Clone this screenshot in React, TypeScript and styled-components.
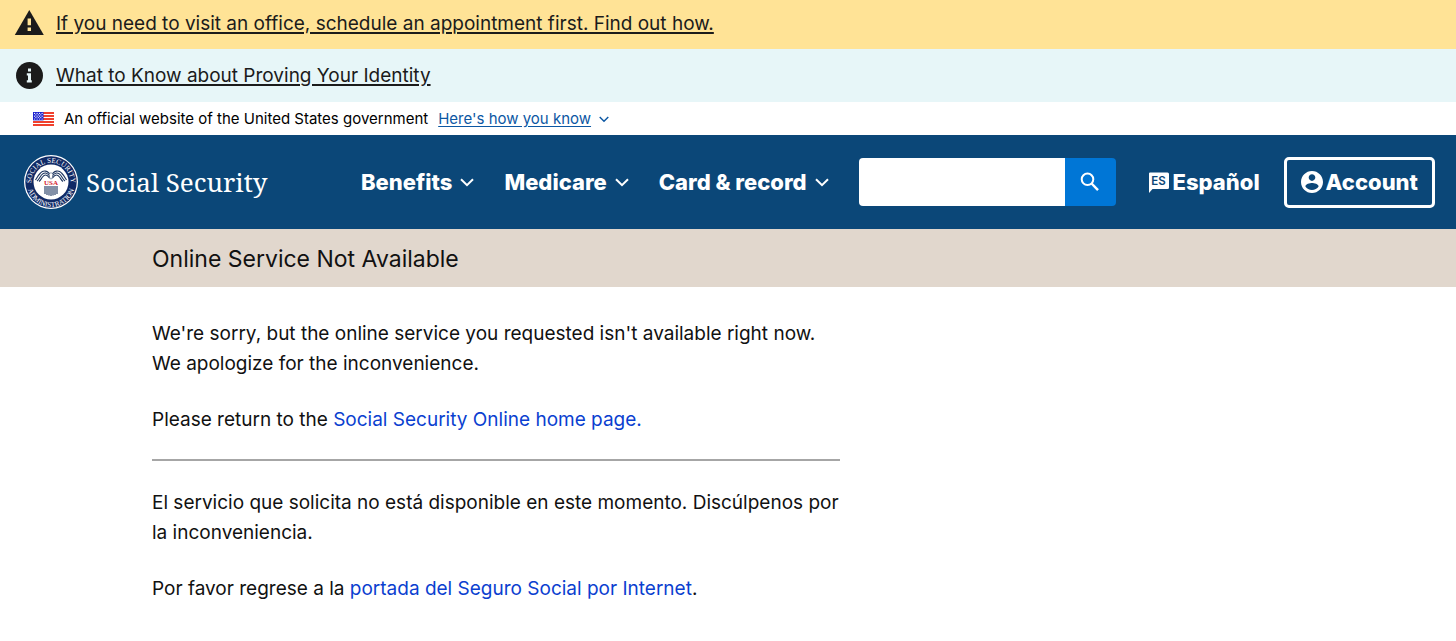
import React from "react";
import styled, { createGlobalStyle } from "styled-components";

const sans = `Inter, "Liberation Sans", sans-serif`;
const serif = `"Noto Serif", "Liberation Serif", serif`;

const GlobalStyle = createGlobalStyle`
  *, *::before, *::after { box-sizing: border-box; }
  body { margin: 0; background: #fff; color: #111; font-family: ${sans}; }
`;

const Alert = styled.section<{ $tone: "warning" | "info" }>`
  display: flex;
  align-items: center;
  gap: 10px;
  padding: ${(p) => (p.$tone === "warning" ? "9px 14px 10px" : "12px 14px 11px")};
  background: ${(p) => (p.$tone === "warning" ? "#ffe396" : "#e7f6f8")};
`;

const AlertIcon = styled.svg`
  flex: none;
  width: 32px;
  height: 30px;
`;

const AlertLink = styled.a`
  color: #1b1b1b;
  font-size: 19px;
  line-height: 30px;
  text-underline-offset: 2px;
  text-decoration-thickness: 2px;
`;

const GovBanner = styled.section`
  display: flex;
  align-items: center;
  gap: 10px;
  min-height: 33px;
  padding: 0 33px;
  color: #000;
  font-size: 15px;
  line-height: 20px;
`;

const Flag = styled.svg`
  flex: none;
  width: 21px;
  height: 14px;
`;

const BannerButton = styled.button`
  display: flex;
  align-items: center;
  gap: 8px;
  padding: 0;
  border: 0;
  background: none;
  color: #0c57a3;
  font: inherit;
  cursor: pointer;
`;

const Underlined = styled.span`
  text-decoration: underline;
  text-underline-offset: 2px;
`;

const Chevron = styled.svg<{ $size: number }>`
  flex: none;
  width: ${(p) => p.$size}px;
  height: ${(p) => p.$size}px;
  fill: none;
  stroke: currentColor;
  stroke-width: 2;
`;

const Header = styled.header`
  display: flex;
  align-items: center;
  justify-content: space-between;
  min-height: 94px;
  padding: 0 21px 0 24px;
  background: #0b4778;
  color: #fff;
`;

const Brand = styled.a`
  display: flex;
  align-items: center;
  gap: 8px;
  color: #fff;
  font-family: ${serif};
  font-size: 26px;
  line-height: 40px;
  text-decoration: none;
  white-space: nowrap;
`;

const Seal = styled.svg`
  flex: none;
  width: 54px;
  height: 54px;
`;

const Tools = styled.div`
  display: flex;
  align-items: center;
  font-size: 22px;
  font-weight: 800;
  line-height: 30px;
`;

const Nav = styled.nav`
  display: flex;
  gap: 30px;
  margin-right: 30px;
`;

const NavButton = styled.button`
  display: flex;
  align-items: center;
  gap: 8px;
  padding: 0;
  border: 0;
  background: none;
  color: #fff;
  font: inherit;
  white-space: nowrap;
  cursor: pointer;
`;

const Search = styled.form`
  display: flex;
  width: 257px;
  height: 48px;
  margin-right: 32px;
  border-radius: 4px;
  overflow: hidden;
`;

const SearchInput = styled.input`
  flex: 1;
  min-width: 0;
  padding: 0 12px;
  border: 0;
  background: #fff;
  font: 400 18px ${sans};
`;

const SearchButton = styled.button`
  display: flex;
  align-items: center;
  justify-content: center;
  width: 51px;
  padding: 0;
  border: 0;
  background: #0076d6;
  color: #fff;
  cursor: pointer;
`;

const ToolLink = styled.a<{ $boxed?: boolean }>`
  display: flex;
  align-items: center;
  gap: 3px;
  color: #fff;
  text-decoration: none;
  white-space: nowrap;
  ${(p) =>
    p.$boxed &&
    `
    height: 51px;
    margin-left: 24px;
    padding: 0 14px;
    border: 3px solid #fff;
    border-radius: 5px;
  `}
`;

const ToolIcon = styled.svg`
  flex: none;
  width: 22px;
  height: 22px;
`;

const TitleBar = styled.div`
  padding: 15px 24px 13px;
  background: #e1d7cd;
`;

const Container = styled.div`
  max-width: 1152px;
  margin: 0 auto;
`;

const Title = styled.h1`
  margin: 0;
  font-size: 23px;
  font-weight: 400;
  line-height: 30px;
`;

const Main = styled.main`
  padding: 32px 24px;
  font-size: 19px;
  line-height: 30px;
`;

const Message = styled.section`
  display: flex;
  flex-direction: column;
  gap: 26px;
  max-width: 688px;
`;

const Paragraph = styled.p`
  margin: 0;
`;

const Rule = styled.hr`
  max-width: 688px;
  height: 2px;
  margin: 24px 0 27px;
  border: 0;
  background: #a6a6a6;
`;

const BodyLink = styled.a`
  color: #0b3fd0;
  text-decoration: none;
`;

const NAV_ITEMS = ["Benefits", "Medicare", "Card & record"];

function Down({ size }: { size: number }) {
  return (
    <Chevron $size={size} viewBox="0 0 14 14" aria-hidden="true">
      <path d="M1 4.2 7 10.2 13 4.2" />
    </Chevron>
  );
}

function UsFlag() {
  return (
    <Flag viewBox="0 0 21 14" aria-hidden="true">
      <rect width="21" height="14" fill="#fff" />
      {[0, 3, 6, 9, 12].map((y) => (
        <rect key={y} y={y} width="21" height="2" fill="#f0402c" />
      ))}
      <rect width="10.5" height="8.4" fill="#1d24d0" />
      {[1.4, 4.2, 7].map((y) =>
        [1.6, 4.1, 6.6, 9.1].map((x) => <circle key={`${x}-${y}`} cx={x} cy={y} r="0.6" fill="#fff" />)
      )}
      {[2.8, 5.6].map((y) =>
        [2.9, 5.3, 7.8].map((x) => <circle key={`${x}-${y}`} cx={x} cy={y} r="0.6" fill="#fff" />)
      )}
    </Flag>
  );
}

function AgencySeal() {
  return (
    <Seal viewBox="0 0 108 108" aria-hidden="true">
      <defs>
        <path id="seal-top" d="M16 66 A39.500 39.500 0 1 1 92 66" />
        <path id="seal-bottom" d="M6 56 A48 48 0 0 0 102 56" />
      </defs>
      <circle cx="54" cy="54" r="54" fill="#fff" />
      <circle cx="54" cy="54" r="51.500" fill="#102a66" />
      <circle cx="54" cy="54" r="35" fill="#fff" />
      <g fill="#fff" fontFamily="Liberation Serif, serif" fontSize="14.500">
        <text textAnchor="middle">
          <textPath href="#seal-top" startOffset="50%">SOCIAL SECURITY</textPath>
        </text>
        <text textAnchor="middle">
          <textPath href="#seal-bottom" startOffset="50%">ADMINISTRATION</textPath>
        </text>
      </g>
      <g fill="none" stroke="#1d355f" strokeWidth="2.200">
        <path d="M54 42 C48 30 38 30 33 36 C28 41 26 45 23 50" />
        <path d="M53 44 C46 34 40 34 35 40 C31 45 30 49 26 52" />
        <path d="M51 46 C45 38 41 39 37 44 C34 48 33 51 30 53" />
        <path d="M54 42 C60 30 70 30 75 36 C80 41 82 45 85 50" />
        <path d="M55 44 C62 34 68 34 73 40 C77 45 78 49 82 52" />
        <path d="M57 46 C63 38 67 39 71 44 C74 48 75 51 78 53" />
      </g>
      <path d="M50 38 C51 35 57 35 58 38 L56 48 H52 Z" fill="#fff" stroke="#1d355f" strokeWidth="1" />
      <path d="M41 49h26v11H41z" fill="#fff" />
      <text x="54" y="60" textAnchor="middle" fill="#d3222f" fontFamily="Liberation Serif, serif" fontWeight="700" fontSize="14">
        USA
      </text>
      <path
        d="M42 62V78M46 62V80M50 62V81M54 62V82M58 62V81M62 62V80M66 62V78"
        stroke="#1d355f"
        strokeWidth="2.200"
      />
    </Seal>
  );
}

export default function App() {
  return (
    <>
      <GlobalStyle />
      <Alert $tone="warning">
        <AlertIcon viewBox="0 1 32 30" aria-hidden="true">
          <path d="M15.300 2 29.800 27H.8Z" fill="#1b1b1b" />
          <path d="M13.600 10.500h3.400v6.800h-3.400zM13.600 19.600h3.400v3.300h-3.400z" fill="#ffe396" />
        </AlertIcon>
        <AlertLink href="#office">If you need to visit an office, schedule an appointment first. Find out how.</AlertLink>
      </Alert>
      <Alert $tone="info">
        <AlertIcon viewBox="0 1 32 30" aria-hidden="true">
          <circle cx="15.500" cy="15.500" r="13.500" fill="#1b1b1b" />
          <path d="M14 8.500h3v3h-3zM12.800 13.300H17v7h.8v2.300h-5v-2.300H14v-4.700h-1.200z" fill="#e7f6f8" />
        </AlertIcon>
        <AlertLink href="#identity">What to Know about Proving Your Identity</AlertLink>
      </Alert>
      <GovBanner aria-label="Official government website">
        <UsFlag />
        <span>An official website of the United States government</span>
        <BannerButton type="button">
          <Underlined>Here&#39;s how you know</Underlined>
          <Down size={10} />
        </BannerButton>
      </GovBanner>
      <Header>
        <Brand href="#home">
          <AgencySeal />
          <span>Social Security</span>
        </Brand>
        <Tools>
          <Nav aria-label="Primary">
            {NAV_ITEMS.map((item) => (
              <NavButton key={item} type="button">
                {item}
                <Down size={14} />
              </NavButton>
            ))}
          </Nav>
          <Search role="search" onSubmit={(e) => e.preventDefault()}>
            <SearchInput type="search" aria-label="Search" />
            <SearchButton type="submit" aria-label="Submit search">
              <ToolIcon viewBox="0 0 22 22" fill="none" stroke="currentColor" strokeWidth="2" aria-hidden="true">
                <circle cx="8.500" cy="8.300" r="5.800" />
                <path d="m12.600 12.500 6.400 6.700" strokeWidth="2.400" />
              </ToolIcon>
            </SearchButton>
          </Search>
          <ToolLink href="#es" lang="es">
            <ToolIcon viewBox="0 0 22 22" aria-hidden="true">
              <path d="M2 1.500h17.500a1.500 1.500 0 0 1 1.500 1.500v13.500a1.500 1.500 0 0 1-1.500 1.500H4.500L1 22V2.500a1 1 0 0 1 1-1Z" fill="#fff" />
              <text x="10.500" y="14" textAnchor="middle" fontSize="11.500" fontWeight="600" fill="#0b4778">
                ES
              </text>
            </ToolIcon>
            Español
          </ToolLink>
          <ToolLink href="#account" $boxed>
            <ToolIcon viewBox="2 2 20 20" fill="currentColor" aria-hidden="true">
              <path d="M12 2C6.480 2 2 6.480 2 12s4.480 10 10 10 10-4.480 10-10S17.520 2 12 2zm0 3c1.660 0 3 1.340 3 3s-1.340 3-3 3-3-1.340-3-3 1.340-3 3-3zm0 14.200c-2.500 0-4.710-1.280-6-3.220.030-1.990 4-3.080 6-3.080 1.990 0 5.970 1.090 6 3.080-1.290 1.940-3.500 3.220-6 3.220z" />
            </ToolIcon>
            Account
          </ToolLink>
        </Tools>
      </Header>
      <TitleBar>
        <Container>
          <Title>Online Service Not Available</Title>
        </Container>
      </TitleBar>
      <Main>
        <Container>
          <Message>
            <Paragraph>
              We&#39;re sorry, but the online service you requested isn&#39;t available right now. We apologize for the
              inconvenience.
            </Paragraph>
            <Paragraph>
              Please return to the <BodyLink href="#home">Social Security Online home page.</BodyLink>
            </Paragraph>
          </Message>
          <Rule />
          <Message lang="es">
            <Paragraph>
              El servicio que solicita no está disponible en este momento. Discúlpenos por la inconveniencia.
            </Paragraph>
            <Paragraph>
              Por favor regrese a la <BodyLink href="#inicio">portada del Seguro Social por Internet</BodyLink>.
            </Paragraph>
          </Message>
        </Container>
      </Main>
    </>
  );
}
